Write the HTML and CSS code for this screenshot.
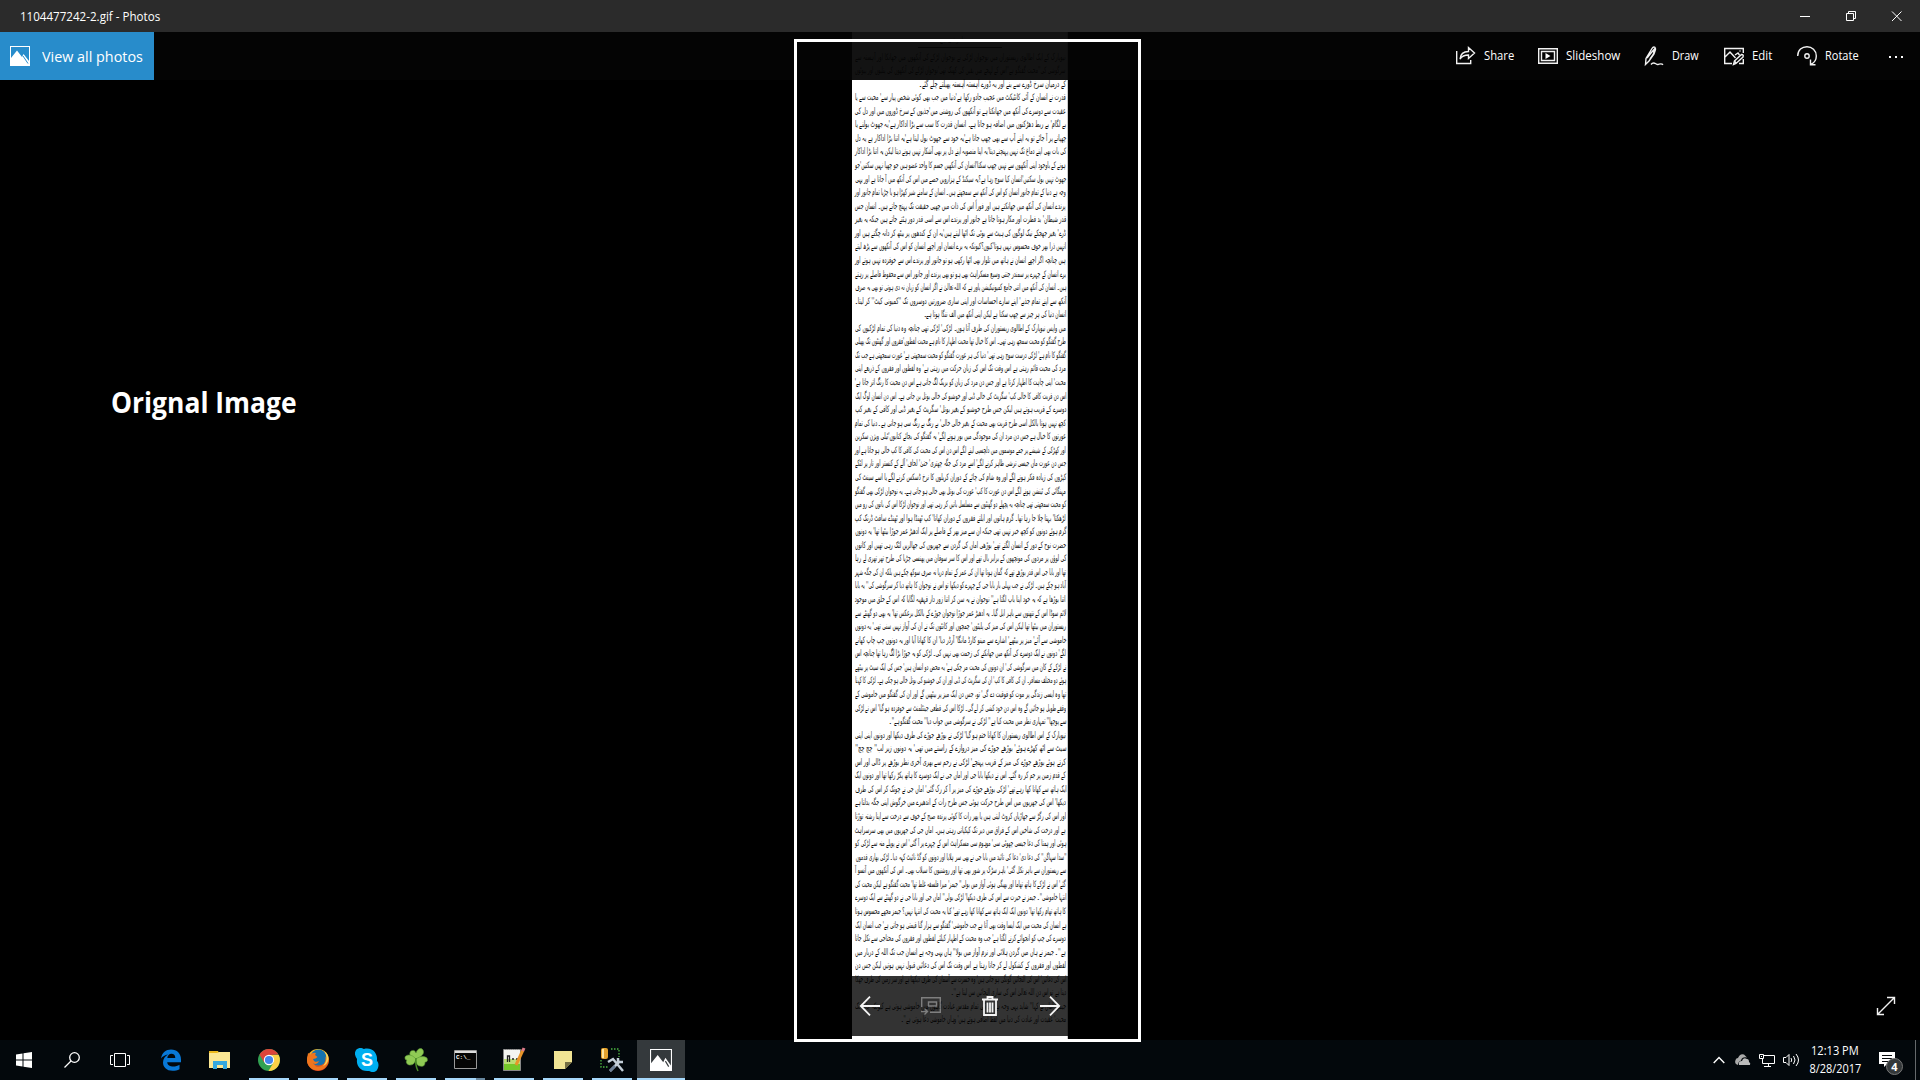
FILE: index.html
```html
<!DOCTYPE html>
<html lang="en">
<head>
<meta charset="utf-8">
<title>1104477242-2.gif - Photos</title>
<link rel="stylesheet" href="styles.css">
</head>
<body>
<header class="titlebar">
  <span class="title fit" data-w="140">1104477242-2.gif - Photos</span>
  <div class="window-buttons">
    <svg width="46" height="32"><path d="M18 16.500h10" class="line"/></svg>
    <svg width="46" height="32"><path d="M18.500 13.500h7v7h-7zM20.500 13.500v-2h7v7h-2" class="line"/></svg>
    <svg width="46" height="32"><path d="M18 11.500l9.500 9.500M27.500 11.500L18 21" class="line"/></svg>
  </div>
</header>
<main class="viewer">
  <div class="caption"><span class="fit" data-w="186">Orignal Image</span></div>
  <article class="page" lang="ur" dir="rtl">
    <h1><span class="fit" data-w="40">محبت خاموشی ہے</span></h1>
    <div class="lines">
<p>نیویارک کے ایک اطالوی ریستوران میں نوجوان لڑکی نے نوجوان لڑکے کی آنکھوں میں جھانکا اور آہستہ سے</p>
<p>سرگوشی کی''محبت گفتگو ہے''اس کے لہجے میں یقین کی کھنک تھی'نوجوان لڑکے کی آنکھوں کی پتلیوں اور پپوٹوں</p>
<p data-w="147">کے درمیان سرخ ڈورے سے بنے اور یہ ڈورے آہستہ آہستہ پھیلتے چلے گئے۔</p>
<p>قدرت نے انسان کے آئی کانٹیکٹ میں عجیب جادو رکھا ہے'دنیا میں جب بھی کوئی شخص پیار سے' محبت سے یا</p>
<p>عقیدت سے دوسرے کی آنکھ میں جھانکتا ہے تو آنکھوں کی روشنی میں'جذبوں کے سرخ ڈوروں میں اور دل کی</p>
<p>بے لگام' بے ربط دھڑکنوں میں اضافہ ہو جاتا ہے۔ انسان قدرت کا سب سے بڑا اداکار ہے'یہ جھوٹ بولنے یا</p>
<p>چھپانے پر آ جائے تو یہ اپنے آپ سے بھی چھپ جاتا ہے'یہ خود سے جھوٹ بول لیتا ہے'یہ اتنا بڑا اداکار ہے یہ دل</p>
<p>کی بات بھی اپنے دماغ تک نہیں پہنچنے دیتا'یہ اپنا منصوبہ اپنے دل پر بھی آشکار نہیں ہونے دیتا لیکن یہ اتنا بڑا اداکار</p>
<p>ہونے کے باوجود اپنی آنکھوں سے نہیں چھپ سکتا'انسان کی آنکھیں جسم کا واحد عضو ہیں جو چھپا نہیں سکتیں'جو</p>
<p>جھوٹ نہیں بول سکتیں'انسان کیا سوچ رہا ہے؟یہ سیکنڈ کے ہزارویں حصے میں اس کی آنکھ میں آ جاتا ہے اور یہی</p>
<p>وجہ ہے دنیا کے تمام جانور انسان کو اس کی آنکھ سے سمجھتے ہیں۔ انسان کے سامنے شیر کھڑا ہو یا چڑیا تمام جانور اور</p>
<p>پرندے انسان کی آنکھ میں جھانکتے ہیں اور فوراً اس کی ذات میں چھپی حقیقت تک پہنچ جاتے ہیں۔ انسان جس</p>
<p>قدر شیطان' بد فطرت اور مکار ہوتا جاتا ہے جانور اور پرندے اس سے اسی قدر دور ہٹتے جاتے ہیں جبکہ یہ بغیر</p>
<p>ڈرے' بغیر جھجکے نیک لوگوں کی ہیٹ سے بوٹی تک اٹھا لیتے ہیں'یہ ان کے کندھوں پر بیٹھ کر دانہ چگتے ہیں اور</p>
<p>انہیں ذرا بھر خوف محسوس نہیں ہوتا'کیوں؟کیونکہ یہ برے انسان اور اچھے انسان کو اس کی آنکھوں سے پڑھ لیتے</p>
<p>ہیں چنانچہ اگر اچھے انسان نے ہاتھ میں تلوار بھی اٹھا رکھی ہو تو جانور اور پرندے اس سے خوفزدہ نہیں ہوتے اور</p>
<p>برے انسان کے چہرے پر سمندر جتنی وسیع مسکراہٹ بھی ہو تو بھی پرندے اور جانور اس سے محفوظ فاصلے پر رہتے</p>
<p>ہیں۔ انسان کی آنکھ میں اتنی جامع کمیونیکیشن پاور ہے کہ اللہ تعالیٰ نے اگر انسان کو زبان نہ دی ہوتی تو بھی یہ صرف</p>
<p>آنکھ سے اپنے تمام جذبے' اپنے سارے احساسات اور اپنی ساری ضرورتیں دوسروں تک ''کمیونی کیٹ'' کر لیتا۔</p>
<p data-w="142">انسان دنیا کی ہر چیز سے چھپ سکتا ہے لیکن اپنی آنکھ میں الف ننگا ہوتا ہے۔</p>
<p>میں واپس نیویارک کے اطالوی ریستوران کی طرف آتا ہوں۔ لڑکی' لڑکی تھی چنانچہ وہ دنیا کی تمام لڑکیوں کی</p>
<p>طرح گفتگو کو محبت سمجھ رہی تھی۔ اس کا خیال تھا محبت اظہار کا نام ہے محبت لفظوں'فقروں اور گھنٹوں تک پھیلی</p>
<p>گفتگو کا نام ہے' لڑکی درست سوچ رہی تھی' دنیا کی ہر عورت گفتگو کو محبت سمجھتی ہے' عورت سمجھتی ہے جب تک</p>
<p>مرد کی محبت قائم رہتی ہے اس وقت تک اس کی زبان حرکت میں رہتی ہے' وہ لفظوں اور فقروں کے ذریعے اپنی</p>
<p>محبت' اپنی چاہت کا اظہار کرتا ہے اور جس دن مرد کی زبان کو بریک لگ جاتی ہے اس دن محبت کا رنگ اتر جاتا ہے'</p>
<p>اس دن قربت کافی کا خالی کپ' سگریٹ کی خالی ڈبی اور خوشبو کی خالی بوتل بن جاتی ہے۔ اس دن انسان لوگ ایک</p>
<p>دوسرے کے قریب ہوتے ہیں لیکن جس طرح خوشبو کے بغیر بوتل' سگریٹ کے بغیر ڈبی اور کافی کے بغیر کپ</p>
<p>کچھ نہیں ہوتا بالکل اسی طرح قربت بھی محبت کے بغیر خالی خالی' بے رنگ بے رنگ سی ہو جاتی ہے۔ دنیا کی تمام</p>
<p>عورتوں کا خیال ہے جس دن مرد ان کی موجودگی میں بور ہونے لگے' یہ گفتگو کی بجائے کتابوں'ٹیلی ویژن سکرین</p>
<p>اور کھڑکی کے شیشے پر جمے موسموں میں دلچسپی لینے لگے اس دن اس کی محبت کی کافی کا کپ خالی ہو جاتا ہے اور</p>
<p>جس دن عورت ماں جیسی ترشی ظاہر کرنے لگے' اسے مرد کی جگہ چھتری' حتیٰ' لحاف' آلے کے کنستر اور تار پر لٹکے</p>
<p>کپڑوں کی زیادہ فکر ہونے لگے اور وہ شام کی چائے کے دوران کریلوں کا نرخ ڈسکس کرنے لگے یا اسے سینٹ کی</p>
<p>مہنگائی کی ٹینشن ہونے لگے اس دن عورت کا کپ' عورت کی بوتل بھی خالی ہو جاتی ہے۔ یہ نوجوان لڑکی بھی گفتگو</p>
<p>کو محبت سمجھتی تھی چنانچہ یہ پچھلے دو گھنٹوں سے مسلسل باتیں کر رہی تھی اور نوجوان لڑکا اس کی باتوں کی رو میں</p>
<p>لڑھکتا' بہتا چلا جا رہا تھا۔ گرم ہاتوں اور ابلتے فقروں کے دوران کھاتا' کپ ٹھنڈا ہوا اور ٹھنڈے سافٹ ڈرنک کپ</p>
<p>گرم ہوئے دونوں کو کچھ خبر نہیں تھی جبکہ ان سے میز بھر کے فاصلے پر ایک ادھیڑ عمر جوڑا بیٹھا تھا' یہ دونوں</p>
<p>حضرت نوح کے دور کے انسان لگتے تھے' بوڑھی اماں کی گردن سے جھریوں کی جھالریں لٹک رہی تھیں اور کانوں</p>
<p>کی لوؤں پر مردوں کی مونچھوں کے برابر بال تھے اور اس کا سر سوفان میں پھنسی چڑیا کی طرح تھر تھری لے رہا</p>
<p>تھا اور بابا جی اس قدر بوڑھے تھے کہ گمان ہوتا تھا ان کی عمر کے تمام دریا نہ صرف سوکھ چکے ہیں بلکہ ان کی جگہ شہر</p>
<p>آباد ہو چکے ہیں۔ لڑکی نے جب پہلی بار بابا جی کے چہرے کو دیکھا تو اس نے نوجوان کا ہاتھ دبا کر سرگوشی کی'' یہ بابا</p>
<p>اتنا بوڑھا ہے کہ یہ خود اپنا باپ لگتا ہے'' نوجوان نے یہ سن کر اتنا زور دار قہقہہ لگایا کہ اس کے حلق میں موجود</p>
<p>لائم سوڈا اس کے نتھنوں سے باہر ابل گیا۔ یہ ادھیڑ عمر جوڑا نوجوان جوڑے کے بالکل برعکس تھا' یہ بھی دو گھنٹے سے</p>
<p>ریستوران میں بیٹھا تھا لیکن اس کی میز کی پلیٹوں' چمچوں اور کانٹوں تک نے ان کی آواز نہیں سنی تھی' یہ دونوں</p>
<p>خاموشی سے آئے' میز پر بیٹھے' اشارے سے مینو کارڈ مانگا' آرڈر دیا' ان کا کھانا آیا اور یہ دونوں چپ چاپ کھانے</p>
<p>لگے' دونوں نے ایک دوسرے کی آنکھ میں جھانکنے کی زحمت بھی نہیں کی۔ لڑکی کو یہ جوڑا بڑا لگ رہا تھا چنانچہ اس</p>
<p>نے لڑکے کے کان میں سرگوشی کی' ان دونوں کی محبت مر چکی ہے' یہ محض دو انسان ہیں' جس کی ایک سیٹ پر بیٹھے</p>
<p>ہوئے دو مختلف مسافر۔ ان کی کافی کا کپ' ان کی سگریٹ کی ڈبی اور ان کی خوشبو کی بوتل خالی ہو چکی ہے۔ لڑکی کا کہنا</p>
<p>تھا وہ ایسی زندگی پر موت کو فوقیت دے گی' تو، جس دن ایک میز پر بیٹھیں گے اور ان کی گفتگو میں خاموشی کے</p>
<p>وقفے طویل ہو جائیں گے وہ اس دن خود کشی کر لے گی۔ لڑکا اس کی قطعی جینٹلمنٹ سے خوفزدہ ہو گیا' اس نے لڑکی</p>
<p data-w="177">سے پوچھا'' تمہاری نظر میں محبت کیا ہے'' لڑکی نے سرگوشی میں جواب دیا'' محبت گفتگو ہے''۔</p>
<p>نیویارک کے اس اطالوی ریستوران کا کھانا ختم ہو گیا' لڑکی نے بوڑھے جوڑے کی طرف دیکھا اور دونوں اپنی اپنی</p>
<p>سیٹ سے اٹھ کھڑے ہوئے' بوڑھے جوڑے کی میز دروازے کے راستے میں تھی' یہ دونوں زیر لب'' چچ چچ''</p>
<p>کرتے ہوئے بوڑھے جوڑے کی میز کے قریب پہنچے' لڑکی نے رحم سے بھری آخری نظر بوڑھے پر ڈالی اور اس</p>
<p>کے قدم زمین پر جم کر رہ گئے۔ اس نے دیکھا بابا جی اور اماں جی نے ایک دوسرے کا ہاتھ پکڑ رکھا تھا اور دونوں ایک</p>
<p>ایک ہاتھ سے کھانا کھا رہے تھے' لڑکی بوڑھے جوڑے کی میز پر آ کر رک گئی' اماں جی نے چونک کر اس کی طرف</p>
<p>دیکھا' اس کی جھریوں میں اس طرح حرکت ہوئی جس طرح رات کے اندھیرے میں خرگوش اپنی جگہ بدلتا ہے</p>
<p>اور اس کی رگڑ سے جھاڑیاں کروٹ لیتی ہیں یا پھر رات کا کوئی پرندہ صبح کے خوف سے درخت سے اپنا رشتہ توڑتا</p>
<p>ہے اور درخت کی شاخیں اس کے فراق میں دیر تک کپکپاتی رہتی ہیں۔ اماں جی کی جھریوں میں بھی سرسراہٹ</p>
<p>ہوئی اور ہمتا کی دعا جیسی چھوٹی سی' موہوم سی مسکراہٹ اس کے چہرے پر آ گئی' اس نے پوپلے منہ سے لڑکی کو</p>
<p>''سدا سہاگن'' کی دعا دی' دعا کی تائید میں بابا جی نے بھی سر ہلایا اور دونوں کو گڈ نائیٹ کہہ دیا۔ لڑکی بھاری قدموں</p>
<p>سے ریستوران سے باہر نکل گئی' باہر سڑک پر شور بھی تھا اور روشنیوں کا سیلاب بھی۔ اس کی آنکھوں میں آنسو آ</p>
<p>گئے' اس نے لڑکے کا ہاتھ تھاما اور بھیگی ہوئی آواز میں بولی'' جیمز' میرا فلسفہ غلط تھا' محبت گفتگو ہے لیکن محبت کی</p>
<p>انتہا خاموشی''۔ جیمز نے حیرت سے اس کی طرف دیکھا' لڑکی بولی'' اماں جی اور بابا جی نے دو گھنٹے سے ایک دوسرے</p>
<p>کا ہاتھ تھام رکھا تھا' دونوں ایک ایک ہاتھ سے کھانا کھا رہے تھے' کیا یہ محبت کی انتہا نہیں؟ جیمز مجھے محسوس ہوتا</p>
<p>ہے انسان کی محبت میں ایک ایسا وقت بھی آتا ہے جب خاموشی' گفتگو سے ہزار گنا قیمتی ہو جاتی ہے' جب انسان ایک</p>
<p>دوسرے کی چپ کو انجوائے کرنے لگتا ہے' جب وہ محبت کے اظہار کیلئے لفظوں اور فقروں کی محتاجی سے نکل جاتا</p>
<p>ہے''۔ جیمز نے ہاں میں گردن ہلائی اور نرم آواز میں بولا'' ہاں یہی وجہ ہے انسان جب تک اللہ کے دربار میں</p>
<p>لفظوں اور فقروں کے کشکول لے کر جاتا رہتا ہے اس وقت تک اس کی دعائیں قبول نہیں ہوتیں لیکن جس دن</p>
<p>اس کی دعائیں' اس کی التجائیں گونگی ہو جاتی ہیں' وہ حسرت سے آسمان کی طرف دیکھتا ہے اور سر زمین کی طرف جھکا</p>
<p data-w="115">دیتا ہے تو اس دن اللہ تعالیٰ اس کی ساری التجائیں سن لیتا ہے''۔</p>
<p>جیمز! اماں نے کہا'' شاید یہی وجہ ہے دنیا کی تمام مقدس عبادت گاہوں میں خاموشی ہوتی ہے کیونکہ جانتا تک</p>
<p data-w="165">محبت' عقیدت اور عبادت کی دنیا میں لفظ اضافی ہوتے ہیں' وہاں خاموشی دعا ہوتی ہے''۔</p>
    </div>
  </article>
  <nav class="toolbar">
    <button class="all-photos">
      <svg width="20" height="20" viewBox="0 0 20 20"><path fill="#fff" fill-rule="evenodd" d="M0 0h20v20H0zM1 1v11l6-7.500 5 6.500 1.500-3 5.500 7V1z"/><path d="M13 10l5 7.500" stroke="#288ccb"/></svg>
      <span class="fit" data-w="101">View all photos</span>
    </button>
    <div class="tools">
      <span class="tool" style="left:1456px"><svg width="20" height="20" viewBox="0 0 20 20"><path class="ico" d="M.7 5v12.500h14V14M4 13c.5-5 4-7.500 8.500-7.500V1.500L18.500 7 12.500 12.500V9C9 9 6 10 4 13z"/></svg><span class="fit" data-w="30">Share</span></span>
      <span class="tool" style="left:1538px"><svg width="20" height="20" viewBox="0 0 20 20"><path class="ico" d="M.7 2.700h18.600v14.600H.7zM3.500 5.500h13v9h-13z"/><path d="M7.500 7v6l5-3z" fill="#fff"/></svg><span class="fit" data-w="54">Slideshow</span></span>
      <span class="tool" style="left:1644px"><svg width="20" height="20" viewBox="0 0 20 20"><path class="ico" d="M1.500 18.500l.5-6L8 2.500c1.500-2.500 4-1.500 3.500 1L10 8 5 15zM3 12l4-5 3.500-4-1 5-3.500 5M7 18.500c3-4 5 .5 7 0s3.500-1.500 5 .3"/></svg><span class="fit" data-w="27">Draw</span></span>
      <span class="tool" style="left:1724px"><svg width="20" height="20" viewBox="0 0 20 20"><path class="ico" d="M8 17.500H.7v-15h18.600V7M1 11l5-5 5.500 6M11 9l3-2 1.500 2M9.500 18.500l1-3.500 7-6.500q2.500 0 1.500 2.500l-7 6.500zM10.500 15l2 2.500M19.300 13v4.500H15M15.500 5h1"/></svg><span class="fit" data-w="20">Edit</span></span>
      <span class="tool" style="left:1797px"><svg width="20" height="20" viewBox="0 0 20 20"><path class="ico" d="M.7 10C.7 4 5 .7 10 .7s9.300 4 9.300 9.300c0 4-2 6.800-5.500 8.500M13.500 13.500v5.300h5"/><circle class="ico" cx="10" cy="10" r="2.200"/></svg><span class="fit" data-w="34">Rotate</span></span>
      <span class="tool" style="left:1889px"><svg width="15" height="20"><path d="M0 10h2v2H0zM6 10h2v2H6zM12 10h2v2h-2z" fill="#fff"/></svg></span>
    </div>
  </nav>
  <div class="filmbar">
    <svg width="20" height="20" viewBox="0 0 20 20"><path class="arrow" d="M20 10H1M10 .7L.8 10l9.200 9.300"/></svg>
    <svg class="dim" width="20" height="20" viewBox="0 0 20 20"><path class="ico" d="M.7 11V1.700h18.600v14.600H9M7.500 6h8v4h-8zM0 15.500h6M3.500 12.500l3 3-3 3"/></svg>
    <svg width="18" height="20" viewBox="0 0 18 20"><path class="trash" d="M1 3.500h16M6.500 3V1h5v2M3 4v15h12V4M6.500 6.500v10M9 6.500v10M11.500 6.500v10"/></svg>
    <svg width="20" height="20" viewBox="0 0 20 20"><path class="arrow" d="M0 10h19M10 .7l9.200 9.300-9.200 9.300"/></svg>
  </div>
  <svg class="expand" width="20" height="20" viewBox="0 0 20 20"><path class="ico" d="M2 18L18 2M11 1.500h7.500V8M1.500 12v6.500H8"/></svg>
  <div class="selection"></div>
</main>
<footer class="taskbar">
  <div class="system">
    <i><svg width="16" height="16"><path fill="#fff" d="M0 2.500L6.500 1.500V7.500H0zM7.500 1.300L16 0v7.500H7.500zM0 8.500h6.500v6L0 13.500zM7.500 8.500H16V16l-8.500-1.300z"/></svg></i>
    <i><svg width="16" height="16"><g fill="none" stroke="#fff" stroke-width="1.300"><circle cx="10.500" cy="5.500" r="4.800"/><path d="M7 9L.5 15.500"/></g></svg></i>
    <i><svg width="20" height="16"><path class="line" d="M4.500 1.500h11v13h-11zM3 3.500H.5v9H3M17 3.500h2.500v9H17"/></svg></i>
  </div>
  <div class="apps">
    <i><svg width="22" height="22" viewBox="0 0 22 22"><path fill="#0878d7" d="M1 9.500C2 3.500 6 .5 11 .5c6 0 10 4 10 10v2.700H7.200c.2 3 3 4.300 6 4.300 2.300 0 4.600-.7 6.300-1.800v4.500c-2 1.200-4.500 1.600-7 1.600C6.500 21.800 3 18 3 13.500c0-3.500 2-6.500 5-8-3 .4-5.500 2-7 4zM7.300 9h8c0-2.800-1.500-4.200-3.900-4.200-2.200 0-3.800 1.700-4.100 4.200z"/></svg></i>
    <i><svg width="22" height="18" viewBox="0 0 22 18"><path fill="#edb91c" d="M0 0h9l1 2H0z"/><path fill="#fce793" d="M0 2l8 0 2-1h11v16H0z"/><path fill="#35a8df" d="M4 10h14v8h-4v-4H8v4H4z"/></svg></i>
    <i class="open"><svg width="22" height="22" viewBox="0 0 22 22"><circle cx="11" cy="11" r="11" fill="#31a152"/><path fill="#dd4439" d="M1.500 5.500A11 11 0 0 1 20.500 5.500L11 6 6.200 13.500z"/><path fill="#fbd147" d="M11 6h9.700A11 11 0 0 1 10.500 22L15.500 13.500z"/><circle cx="11" cy="11" r="5.200" fill="#fff"/><circle cx="11" cy="11" r="4.100" fill="#4385eb"/></svg></i>
    <i class="open"><svg width="22" height="22" viewBox="0 0 22 22"><defs><linearGradient id="fx" x2="0" y2="1"><stop stop-color="#f8c42b"/><stop offset=".6" stop-color="#ef6a1a"/><stop offset="1" stop-color="#c93521"/></linearGradient></defs><circle cx="11" cy="11" r="11" fill="url(#fx)"/><circle cx="11.500" cy="8.500" r="8" fill="#1773ae"/><path fill="#ef751d" d="M1 4l2.500 1.500Q6 3 9 4L8 6l2.500 2-2 1.500L6 10c1 3 3.500 3.500 6 2-1 3-4 3.500-6 2.500l3 3c6 1 10-2 9.500-10l2.500 4c0 5-4 10-10 10S0 17 0 11z"/><path fill="#f9d65b" d="M17 2c3 4 4 10-1 15 6-2 8-11 1-15z"/></svg></i>
    <i class="open"><svg width="24" height="24" viewBox="0 0 24 24"><path fill="#00aef0" d="M1 2C4-1 7 0 9 1c8-2 14 4 13 12 2 2 2 6 0 9s-6 2-8 1C6 24 1 18 2 11 0 8-1 5 1 2z"/><text x="12" y="18" class="skype">S</text></svg></i>
    <i class="open"><svg width="24" height="24" viewBox="0 0 24 24"><g fill="#8fca55" stroke="#5c9c35" stroke-width=".6"><path d="M12 11C7 10 4 6 7 3c2-1 4-1 5 2 1-4 5-6 7-3 2 4-2 7-7 9z"/><path d="M12 11C7 5 2 7 1 9c0 2 0 3 2 3-2 3 1 5 3 5 4 0 5-3 6-6z"/><path d="M12 11c4-3 8-3 11-1 1 3 0 4-2 4 0 4-2 5-5 4-3 0-4-3-4-7z"/></g><path d="M12 10q-1 7 2 13" fill="none" stroke="#4a8c28" stroke-width="1.500"/></svg></i>
    <i class="open split"><svg width="23" height="20" viewBox="0 0 23 20"><path fill="#050505" stroke="#999" d="M.5.5h22v18H.5z"/><path fill="#ddd" d="M1 1h21v2H1z"/><text x="2" y="9" class="cmd">C:\_</text></svg></i>
    <i class="open"><svg width="24" height="24" viewBox="0 0 24 24"><path fill="#f4f5f1" stroke="#888" d="M1.500 1.500h17v21h-17z"/><path fill="#75c82a" d="M2 15h16v7H2z"/><path fill="#bbdf74" d="M2 11h16v5H2z"/><path d="M2 1.500h16" stroke="#999" stroke-dasharray="1 1"/><path d="M5.500 14V8h2v6M10 11h2M14 11h2" fill="none" stroke="#222" stroke-width="1.300"/><path d="M21 2l-7 15" stroke="#e89429" stroke-width="3"/><path d="M22 0l-1.300 3" stroke="#dc7b8a" stroke-width="3"/></svg></i>
    <i class="open"><svg width="18" height="18"><path fill="#f1e494" d="M0 0h18v11l-7 7H0z"/><path fill="#766f43" d="M11 18v-7h7z"/></svg></i>
    <i class="open"><svg width="24" height="24" viewBox="0 0 24 24"><path d="M11 1h8v8M1 12v7h8" fill="none" stroke="#4db642" stroke-dasharray="1.500 1.500" stroke-width="1.300"/><rect x="1" y="0" width="7" height="11" rx="2" fill="#e3a22e"/><path d="M3 1v9" stroke="#ffe6a0" stroke-width="2"/><path d="M10 23L20 13M8 14l5-3 10 12M18 10v4h5" fill="none" stroke="#c3ced8" stroke-width="2.500"/><path d="M10 23l5-5" stroke="#6d8097" stroke-width="2.500"/></svg></i>
    <i class="open active"><svg width="22" height="22" viewBox="0 0 20 20"><path fill="#fff" fill-rule="evenodd" d="M0 0h20v20H0zM1 1v12l6-7.500 5 6.500 2-4 5 7V1z"/><path d="M14 11l3 5" stroke="#33383b"/></svg></i>
  </div>
  <div class="tray">
    <svg width="12" height="8"><path fill="none" stroke="#fff" stroke-width="1.400" d="M.7 7L6 1.500 11.300 7"/></svg>
    <svg class="cloud" width="16" height="12"><path fill="#aaa" d="M3 11Q-1 10 .5 6 1 4 3 4 5-1 9 .5l3 3q-5-1-6 3-3 1-3 4.500z"/><path fill="#bbb" d="M4 11q-1-4 3-4 1-4 5-2 2 0 2 3 2 1 1 3z"/></svg>
    <svg class="net" width="16" height="14"><path class="line" d="M5 2.500h10.500v8H3.500V6M.5 1.500h4v4h-4zM9.500 10.500v3M5 13.500h7M2 3.500h1"/></svg>
    <svg class="sound" width="17" height="14"><path fill="none" stroke="#fff" d="M.5 4.500H3l3-3v11l-3-3H.5zM8 5q1.500 2 0 4M10.500 3q3 4 0 8M13 1q5 6 0 12"/></svg>
    <div class="clock"><span class="fit" data-w="48">12:13 PM</span><span class="fit" data-w="52">8/28/2017</span></div>
    <div class="action"><svg width="16" height="16"><path fill="#fff" d="M0 0h16v12H8l-3 3v-3H0z"/><path stroke="#05090c" d="M3 3.500h10M3 6.500h10M3 9.500h7"/></svg><b>4</b></div>
    <span class="peek"></span>
  </div>
</footer>
<script src="fit.js"></script>
</body>
</html>
```
FILE: styles.css
```css
* { box-sizing: border-box; }
body { margin: 0; width: 1920px; height: 1080px; overflow: hidden; background: #000; color: #fff; font: 12px "Open Sans", "Noto Sans", sans-serif; display: flex; flex-direction: column; }
svg { display: block; flex: none; overflow: visible; }
.fit { display: inline-block; white-space: nowrap; transform-origin: left center; }
.line { fill: none; stroke: #fff; }
.ico { fill: none; stroke: #f2f2f2; stroke-width: 1.4; }
.titlebar { height: 32px; background: #2b2b2b; display: flex; align-items: center; justify-content: space-between; padding-left: 20px; }
.title { line-height: 32px; padding-top: 1px; }
.window-buttons { display: flex; }

.viewer { position: relative; height: 1008px; display: flex; justify-content: center; }
.caption { position: absolute; left: 111px; top: 350px; font: bold 28px/40px "Open Sans", sans-serif; }
.page { width: 216px; height: 1007px; background: #fff; color: #111; font-family: "DejaVu Sans", sans-serif; border-right: 1px solid #ccc; overflow: hidden; }
.page h1 { margin: 0 auto; width: 84px; height: 16px; border-bottom: 1px solid #222; font-size: 8px; line-height: 15px; font-weight: 400; text-align: center; }
.page h1 .fit { transform-origin: center; }
.lines { display: grid; grid-auto-rows: 13.568px; padding: 2.500px 1px 0 3px; }
.lines p { margin: 0; font-size: 9px; line-height: 13.568px; height: 13.568px; white-space: nowrap; }
.lines span { display: inline-block; transform-origin: right center; }

.toolbar { position: absolute; inset: 0 0 auto 0; height: 48px; background: rgba(4, 4, 4, .94); }
.all-photos { height: 48px; width: 154px; border: 0; background: #288ccb; color: #fff; display: flex; align-items: center; gap: 12px; padding: 0 0 0 10px; font: 14.5px "Open Sans", sans-serif; }
.tool { position: absolute; top: 14px; display: flex; align-items: center; gap: 8px; height: 20px; }
.tool .fit { margin-top: -2px; }
.filmbar { position: absolute; left: 852px; top: 944px; width: 216px; height: 60px; background: rgba(0, 0, 0, .8); display: flex; align-items: center; justify-content: space-between; padding: 0 8px; }
.arrow, .trash { fill: none; stroke: #f4f4f4; stroke-width: 1.8; }
.dim { opacity: .4; }
.expand { position: absolute; left: 1876px; top: 964px; }
.selection { position: absolute; left: 794px; top: 7px; width: 347px; height: 1003px; border: 3px solid #fff; z-index: 2; }

.taskbar { height: 40px; background: #03080c; display: flex; }
.taskbar i { width: 48px; height: 40px; display: flex; align-items: center; justify-content: center; position: relative; }
.system, .apps { display: flex; }
.apps { margin-left: 3px; gap: 1px; }
.open::after { content: ""; position: absolute; left: 4px; right: 4px; bottom: 0; height: 2px; background: #a6d8fb; }
.split::after { background: linear-gradient(90deg, #a6d8fb 31px, #6888a0 31px); }
.taskbar .active { background: #34393c; }
.active::after { left: 0; right: 0; }
.skype { fill: #fff; font: bold 18px "Liberation Sans", sans-serif; text-anchor: middle; }
.cmd { fill: #fff; font: bold 6px "Liberation Mono", monospace; }
.tray { margin-left: auto; display: flex; align-items: center; }
.cloud { margin-left: 10px; }
.net { margin-left: 8px; }
.sound { margin-left: 8px; }
.clock { width: 54px; margin-left: 8px; display: flex; flex-direction: column; align-items: center; line-height: 18px; padding-bottom: 1px; }
.clock .fit { transform-origin: center; }
.action { position: relative; margin-left: 17px; width: 36px; }
.action b { position: absolute; left: 7px; top: 6px; width: 17px; height: 17px; border-radius: 50%; background: #34383a; border: 1px solid #777; font-size: 11px; line-height: 15px; text-align: center; }
.peek { width: 1px; height: 40px; background: #65696c; margin-right: 4px; }
```
FILE: fit.js
```js
// Squeeze or stretch each run of text to its column measure.
document.querySelectorAll(".lines p").forEach(p => {
  const s = document.createElement("span");
  s.textContent = p.textContent;
  p.textContent = "";
  p.append(s);
  s.style.transform = `scaleX(${(p.dataset.w || 211) / s.offsetWidth})`;
});
document.querySelectorAll(".fit").forEach(s => {
  s.style.transform = `scaleX(${s.dataset.w / s.offsetWidth})`;
});
```
